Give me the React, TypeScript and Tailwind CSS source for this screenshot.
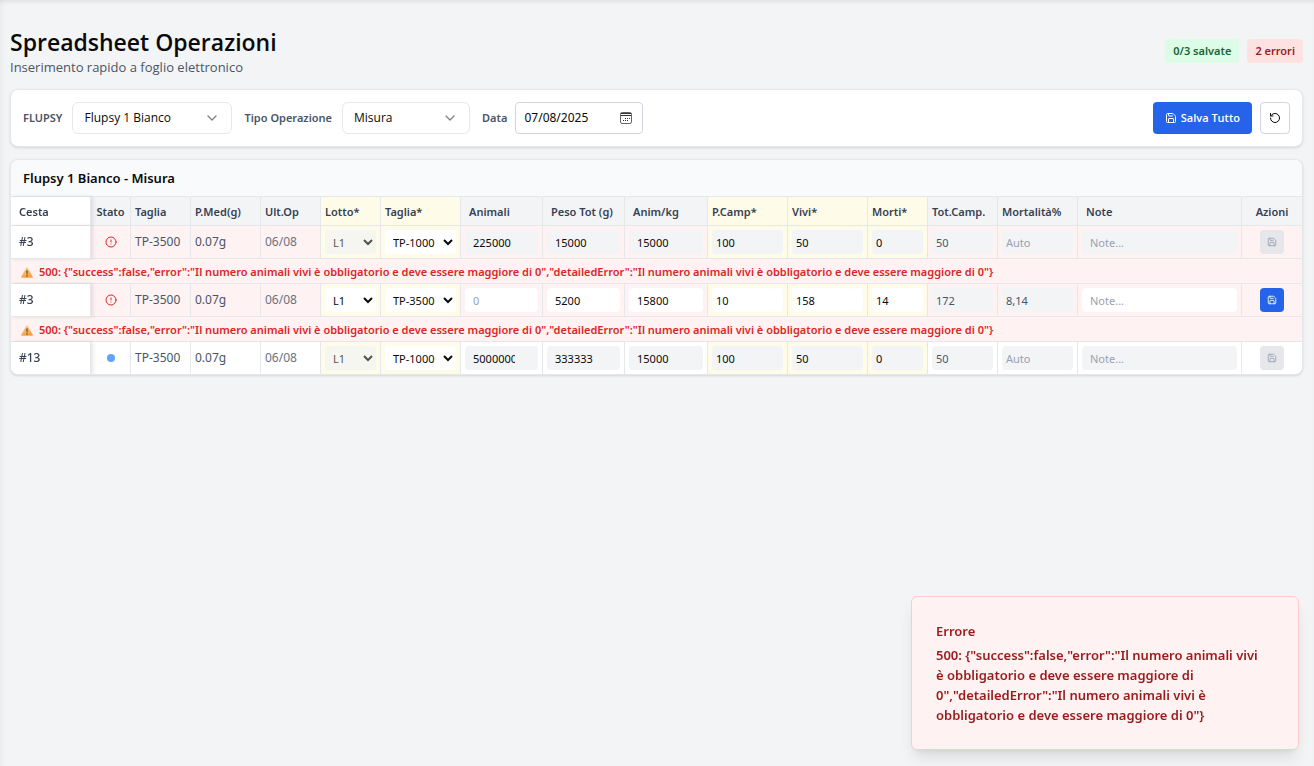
import { ChevronDown, CircleAlert, RotateCcw, Save } from "lucide-react";
import type { ReactNode } from "react";
import { clsx } from "clsx";

const ERROR_TEXT =
  '500: {"success":false,"error":"Il numero animali vivi è obbligatorio e deve essere maggiore di 0","detailedError":"Il numero animali vivi è obbligatorio e deve essere maggiore di 0"}';

type Row = {
  id: string;
  cesta: string;
  error: boolean;
  locked: boolean;
  taglia: string;
  animali: string;
  peso: string;
  animKg: string;
  camp: string;
  vivi: string;
  morti: string;
  tot: string;
  mortalita: string;
};

const rows: Row[] = [
  { id: "r1", cesta: "#3", error: true, locked: true, taglia: "TP-1000", animali: "225000", peso: "15000", animKg: "15000", camp: "100", vivi: "50", morti: "0", tot: "50", mortalita: "" },
  { id: "r2", cesta: "#3", error: true, locked: false, taglia: "TP-3500", animali: "", peso: "5200", animKg: "15800", camp: "10", vivi: "158", morti: "14", tot: "172", mortalita: "8,14" },
  { id: "r3", cesta: "#13", error: false, locked: true, taglia: "TP-1000", animali: "50000000", peso: "333333", animKg: "15000", camp: "100", vivi: "50", morti: "0", tot: "50", mortalita: "" },
];

const columns = [
  { label: "Cesta", col: "w-[80px]", head: "sticky left-0 z-10 bg-white px-2 text-left shadow-[2px_0_4px_rgba(0,0,0,0.1)]" },
  { label: "Stato", col: "w-[40px]", head: "bg-gray-100 px-1 text-center" },
  { label: "Taglia", col: "w-[60px]", head: "bg-gray-100 px-1 text-left" },
  { label: "P.Med(g)", col: "w-[70px]", head: "bg-gray-100 px-1 text-left" },
  { label: "Ult.Op", col: "w-[60px]", head: "bg-gray-100 px-1 text-left" },
  { label: "Lotto*", col: "w-[60px]", head: "bg-[#fefce8] px-1 text-left" },
  { label: "Taglia*", col: "w-[80px]", head: "bg-[#fefce8] px-1 text-left" },
  { label: "Animali", col: "w-[82px]", head: "bg-gray-100 px-2 text-left" },
  { label: "Peso Tot (g)", col: "w-[82px]", head: "bg-gray-100 px-2 text-left" },
  { label: "Anim/kg", col: "w-[83px]", head: "bg-gray-100 px-2 text-left" },
  { label: "P.Camp*", col: "w-[80px]", head: "bg-[#fefce8] px-1 text-left" },
  { label: "Vivi*", col: "w-[80px]", head: "bg-[#fefce8] px-1 text-left" },
  { label: "Morti*", col: "w-[60px]", head: "bg-[#fefce8] px-1 text-left" },
  { label: "Tot.Camp.", col: "w-[70px]", head: "bg-gray-100 px-1 text-left" },
  { label: "Mortalità%", col: "w-[80px]", head: "bg-gray-100 px-1 text-left" },
  { label: "Note", col: "", head: "bg-gray-100 px-2 text-left" },
  { label: "Azioni", col: "w-[60px]", head: "bg-gray-100 px-1 text-center" },
];

function WarningIcon() {
  return (
    <svg className="h-3 w-3 shrink-0" viewBox="0 0 24 24" aria-hidden="true">
      <defs>
        <linearGradient id="warn" x1="0" y1="0" x2="0.4" y2="1">
          <stop offset="0" stopColor="#fdd08a" />
          <stop offset="1" stopColor="#f9a03f" />
        </linearGradient>
      </defs>
      <path d="M10.7 3.6a1.5 1.5 0 0 1 2.6 0l10.3 17.8a1.4 1.4 0 0 1-1.2 2.1H1.6a1.4 1.4 0 0 1-1.2-2.1z" fill="url(#warn)" />
      <path d="M10.7 9h2.6l-.5 8h-1.6z" fill="#4a3f45" />
      <circle cx="12" cy="19.8" r="1.5" fill="#4a3f45" />
    </svg>
  );
}

function CalendarIcon() {
  return (
    <svg className="h-3 w-3" viewBox="0 0 12 12" fill="none" stroke="#333" aria-hidden="true">
      <rect x="0.5" y="0.5" width="11" height="11" rx="1.6" stroke="#666" />
      <path d="M1 1.5h10M1 3.5h10" />
      <path d="M5 6.5h1M7 6.5h1M9 6.5h1M3 8.5h1M5 8.5h1M7 8.5h1" />
    </svg>
  );
}

function PickerSelect({ id, label, value, width }: { id: string; label: string; value: string; width: string }) {
  return (
    <div className="flex items-center gap-2.5">
      <label htmlFor={id} className="text-[11px] font-semibold leading-4 text-gray-600">{label}</label>
      <div className={clsx("relative", width)}>
        <select id={id} className="h-8 w-full appearance-none rounded-md border border-gray-200 bg-white px-[11px] font-['Open_Sans',sans-serif] text-[#0a0a0a]">
          <option>{value}</option>
        </select>
        <ChevronDown className="pointer-events-none absolute right-3 top-2 h-4 w-4 opacity-50" />
      </div>
    </div>
  );
}

function Cell({ children, row, tone }: { children: ReactNode; row: Row; tone?: "yellow" }) {
  return (
    <td
      className={clsx(
        "h-[33px] border-b border-r border-gray-200 p-1 align-middle",
        tone === "yellow" ? "bg-[#fefce8]" : row.error ? "bg-[#fef2f2]" : "bg-white",
      )}
    >
      {children}
    </td>
  );
}

function NumberField({ label, value, locked, wide }: { label: string; value: string; locked: boolean; wide?: boolean }) {
  return (
    <input
      type="number"
      aria-label={label}
      defaultValue={value}
      placeholder="0"
      disabled={locked}
      className={clsx(
        "block h-6 w-full rounded text-[11px] leading-4 text-[#0a0a0a] placeholder:text-gray-400",
        wide ? "px-2" : "px-1",
        locked ? "bg-gray-100" : "bg-white",
      )}
    />
  );
}

function RowSelect({ label, value, locked }: { label: string; value: string; locked: boolean }) {
  return (
    <select
      aria-label={label}
      disabled={locked}
      className={clsx("block h-6 w-full rounded px-1 text-[11px] leading-4 text-[#0a0a0a]", locked ? "bg-gray-100 opacity-70" : "bg-white")}
    >
      <option>{value}</option>
    </select>
  );
}

function SheetRow({ row }: { row: Row }) {
  return (
    <>
      <tr>
        <th scope="row" className="sticky left-0 z-10 border-b border-r border-gray-200 bg-white px-2 text-left text-xs font-medium text-gray-700 shadow-[2px_0_4px_rgba(0,0,0,0.1)]">
          {row.cesta}
        </th>
        <Cell row={row}>
          <span className="flex justify-center">
            {row.error ? (
              <CircleAlert className="h-3 w-3 text-[#dc2626]" aria-label="Errore" />
            ) : (
              <span className="h-2 w-2 rounded-full bg-[#60a5fa]" />
            )}
          </span>
        </Cell>
        <Cell row={row}><span className="text-gray-600">TP-3500</span></Cell>
        <Cell row={row}><span className="text-gray-600">0.07g</span></Cell>
        <Cell row={row}><span className="text-gray-500">06/08</span></Cell>
        <Cell row={row} tone="yellow"><RowSelect label="Lotto" value="L1" locked={row.locked} /></Cell>
        <Cell row={row} tone="yellow"><RowSelect label="Taglia" value={row.taglia} locked={false} /></Cell>
        <Cell row={row}><NumberField label="Animali" value={row.animali} locked={row.locked} wide /></Cell>
        <Cell row={row}><NumberField label="Peso totale" value={row.peso} locked={row.locked} wide /></Cell>
        <Cell row={row}><NumberField label="Animali per kg" value={row.animKg} locked={row.locked} wide /></Cell>
        <Cell row={row} tone="yellow"><NumberField label="Peso campione" value={row.camp} locked={row.locked} /></Cell>
        <Cell row={row} tone="yellow"><NumberField label="Vivi" value={row.vivi} locked={row.locked} /></Cell>
        <Cell row={row} tone="yellow"><NumberField label="Morti" value={row.morti} locked={row.locked} /></Cell>
        <Cell row={row}>
          <input aria-label="Totale campione" readOnly value={row.tot} className="block h-6 w-full rounded bg-gray-100 px-1 text-[11px] leading-4 text-gray-600" />
        </Cell>
        <Cell row={row}>
          <input aria-label="Mortalità" readOnly value={row.mortalita} placeholder="Auto" className="block h-6 w-full rounded bg-gray-100 px-1 text-[11px] leading-4 text-gray-600 placeholder:text-gray-400" />
        </Cell>
        <Cell row={row}>
          <input
            aria-label="Note"
            placeholder="Note..."
            disabled={row.locked}
            className={clsx("block h-6 w-full rounded px-2 text-[11px] leading-4 placeholder:text-gray-400", row.locked ? "bg-gray-100" : "bg-white")}
          />
        </Cell>
        <td className={clsx("border-b border-gray-200", row.error ? "bg-[#fef2f2]" : "bg-white")}>
          <button
            type="button"
            aria-label="Salva riga"
            disabled={row.locked}
            className={clsx(
              "mx-auto flex h-6 w-6 items-center justify-center rounded",
              row.locked ? "bg-gray-200 text-gray-400" : "bg-[#2563eb] text-white",
            )}
          >
            <Save className="h-2.5 w-2.5" />
          </button>
        </td>
      </tr>
      {row.error && (
        <tr>
          <td colSpan={17} className="h-[25px] border-b border-gray-200 bg-[#fef2f2] px-2.5 pt-0.5 text-[11px] font-semibold leading-4 text-[#dc2626]">
            <span className="flex items-center gap-1.5 whitespace-nowrap">
              <WarningIcon />
              {ERROR_TEXT}
            </span>
          </td>
        </tr>
      )}
    </>
  );
}

export default function App() {
  return (
    <div className="min-h-screen bg-gray-100 pb-6 pl-[10px] pr-[11px] pt-[25px] font-['Noto_Sans',sans-serif] text-xs text-[#0a0a0a] shadow-[inset_0_4px_4px_-2px_rgba(0,0,0,0.08),inset_6px_0_6px_-4px_rgba(0,0,0,0.04)]">
      <header className="mb-3 flex items-center justify-between">
        <div className="font-['Open_Sans',sans-serif]">
          <h1 className="pt-0.5 text-[23px] font-semibold leading-[30px]">Spreadsheet Operazioni</h1>
          <p className="text-[13px] leading-5 text-gray-600">Inserimento rapido a foglio elettronico</p>
        </div>
        <div className="flex gap-2 text-[11px] font-semibold leading-4">
          <span className="rounded bg-[#dcfce7] px-2 py-1 text-[#166534]">0/3 salvate</span>
          <span className="rounded bg-[#fee2e2] px-2 py-1 text-[#991b1b]">2 errori</span>
        </div>
      </header>

      <section className="mb-3 flex items-center justify-between rounded-lg border border-gray-200 bg-white p-3 shadow-sm">
        <div className="flex items-center gap-3">
          <PickerSelect id="flupsy" label="FLUPSY" value="Flupsy 1 Bianco" width="w-40" />
          <PickerSelect id="tipo" label="Tipo Operazione" value="Misura" width="w-32" />
          <div className="flex items-center gap-2">
            <label htmlFor="data" className="text-[11px] font-semibold leading-4 text-gray-600">Data</label>
            <div className="flex h-8 w-32 items-center rounded border border-gray-300 bg-white pl-2 pr-2.5">
              <input id="data" defaultValue="07/08/2025" className="min-w-0 flex-1 bg-transparent" />
              <button type="button" aria-label="Apri calendario"><CalendarIcon /></button>
            </div>
          </div>
        </div>
        <div className="flex gap-2">
          <button type="button" className="flex h-8 items-center gap-1 rounded bg-[#2563eb] px-3 font-['Open_Sans',sans-serif] text-[11px] font-semibold leading-4 text-white">
            <Save className="h-3 w-3" />
            Salva Tutto
          </button>
          <button type="button" aria-label="Ripristina" className="flex h-8 items-center rounded border border-gray-300 bg-white px-2">
            <RotateCcw className="h-3 w-3" />
          </button>
        </div>
      </section>

      <section className="overflow-hidden rounded-lg border border-gray-200 bg-white shadow-sm">
        <h2 className="border-b border-gray-200 bg-gray-50 px-3 py-2 text-[13px] font-semibold leading-5">Flupsy 1 Bianco - Misura</h2>
        <table className="-mb-px w-full table-fixed border-separate border-spacing-0">
          <colgroup>
            {columns.map((c) => <col key={c.label} className={c.col} />)}
          </colgroup>
          <thead>
            <tr>
              {columns.map((c) => (
                <th
                  key={c.label}
                  scope="col"
                  className={clsx("h-[29px] whitespace-nowrap border-b border-r border-gray-200 pt-0.5 text-[11px] font-semibold leading-4 text-gray-700 last:border-r-0", c.head)}
                >
                  {c.label}
                </th>
              ))}
            </tr>
          </thead>
          <tbody>
            {rows.map((row) => <SheetRow key={row.id} row={row} />)}
          </tbody>
        </table>
      </section>

      <div role="alert" className="fixed bottom-4 right-[15px] z-20 flex w-[388px] flex-col gap-1 rounded-md border border-[#fecaca] bg-[#fef2f2] py-6 pl-6 pr-10 text-[13px] font-semibold leading-5 text-[#991b1b] shadow-lg">
        <div>Errore</div>
        <div>{ERROR_TEXT}</div>
      </div>
    </div>
  );
}
